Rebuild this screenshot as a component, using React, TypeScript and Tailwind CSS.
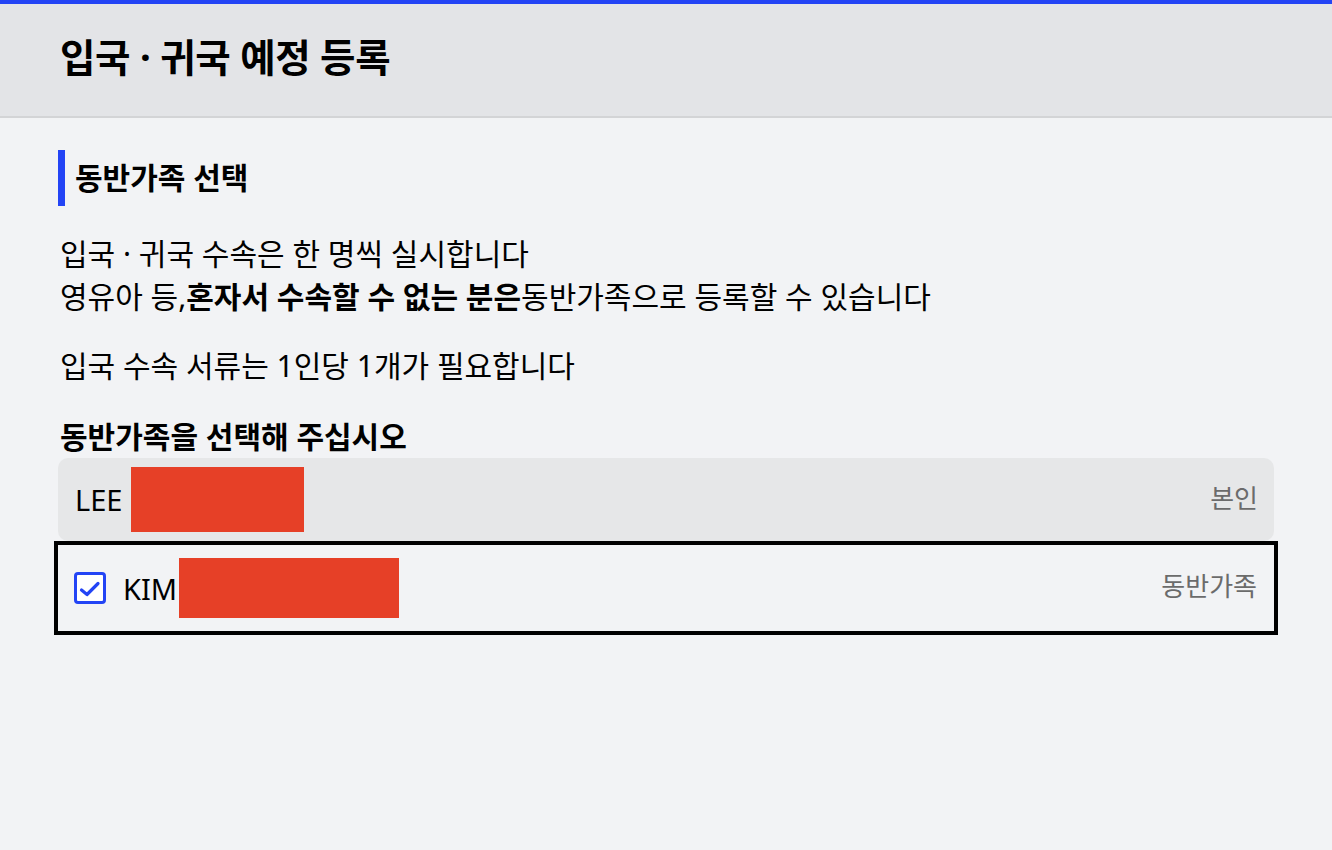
import React from 'react';

const members = [
  { id: 1, name: 'LEE', role: '본인', checked: false, selected: false, mask: 'ml-[9px] my-[9px] w-[173px]' },
  { id: 2, name: 'KIM', role: '동반가족', checked: true, selected: true, mask: 'ml-[2px] my-[13px] w-[220px]' },
];

export default function App() {
  return (
    <div
      className="min-h-[850px] bg-[#f2f3f5] text-black"
      style={{ fontFamily: '"Noto Sans", "Noto Sans CJK KR", sans-serif' }}
    >
      <header className="border-t-4 border-[#2344f5] bg-[#e3e4e7] border-b-2 border-b-[#d3d4d6] h-[118px] flex items-center px-[60px]">
        <h1 className="text-[38.5px] font-bold leading-none tracking-[-0.3px] -mt-[6px]">입국 · 귀국 예정 등록</h1>
      </header>

      <main className="px-[58px] pt-[32px]">
        <div className="flex items-center h-[56px] border-l-[7px] border-[#2344f5] pl-[10px]">
          <h2 className="text-[30px] font-bold leading-none -mt-[1px]">동반가족 선택</h2>
        </div>

        <div className="mt-[26px] pl-[2px] text-[30px] leading-[43px]">
          <p>입국 · 귀국 수속은 한 명씩 실시합니다</p>
          <p>
            영유아 등,<span className="font-bold">혼자서 수속할 수 없는 분은</span>동반가족으로 등록할 수 있습니다
          </p>
          <p className="mt-[26px]">입국 수속 서류는 1인당 1개가 필요합니다</p>
        </div>

        <h3 className="mt-[30px] pl-[2px] text-[30px] font-bold leading-[40px]">동반가족을 선택해 주십시오</h3>

        <ul className="mt-[1px] flex flex-col">
          {members.map(m => (
            <li
              key={m.id}
              className={
                m.selected
                  ? 'h-[94px] -mx-[4px] border-[4px] border-black bg-[#f2f3f5] flex items-center pl-[16px] pr-[17px]'
                  : 'h-[83px] rounded-[10px] bg-[#e6e7e8] flex items-center pl-[17px] pr-[16px]'
              }
            >
              {m.checked && (
                <span className="w-[32px] h-[32px] mr-[17px] rounded-[4px] border-[3px] border-[#2344f5] bg-white flex items-center justify-center">
                  <svg viewBox="0 0 26 26" className="w-[26px] h-[26px]" fill="none" stroke="#2344f5" strokeWidth="3.2" strokeLinecap="round" strokeLinejoin="round">
                    <path d="M4.5 15l5.5 4.5L21 8.5" />
                  </svg>
                </span>
              )}
              <span className="text-[29px] leading-none">{m.name}</span>
              <span className={'self-stretch bg-[#e64027] ' + m.mask} />
              <span className="ml-auto text-[26px] text-[#6b6b6b] leading-none -mt-[4px]">{m.role}</span>
            </li>
          ))}
        </ul>
      </main>
    </div>
  );
}
